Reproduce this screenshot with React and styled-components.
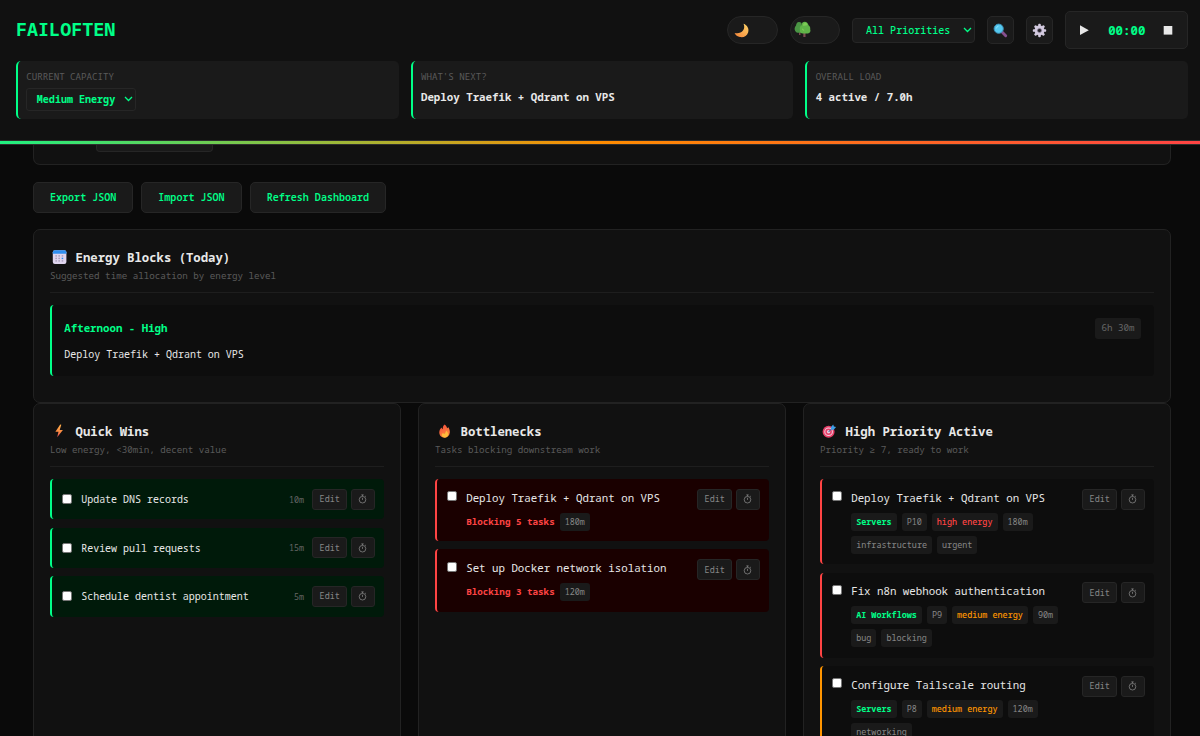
import React from "react";
import styled, { createGlobalStyle, css } from "styled-components";

const GlobalStyle = createGlobalStyle`
  * { box-sizing: border-box; }
  body {
    margin: 0;
    background: #0a0a0a;
    color: #e8e8e8;
    font-family: "Noto Sans Mono", "DejaVu Sans Mono", monospace;
    overflow: hidden;
  }
  button { font-family: inherit; margin: 0; padding: 0; }
`;

const Page = styled.div`
  height: 736px;
  overflow: hidden;
  display: flex;
  flex-direction: column;
`;

/* ---------- header ---------- */
const Header = styled.header`
  flex: none;
  height: 141px;
  padding: 11px 12px 0 16px;
  background: #111;
  border-bottom: 1px solid #2c2c2c;
`;
const TopBar = styled.div`
  display: flex;
  align-items: center;
  justify-content: space-between;
  height: 38px;
`;
const Brand = styled.h1`
  margin: 0 0 2px;
  font-size: 18.4px;
  line-height: 24px;
  font-weight: 700;
  color: #00ff88;
`;
const Tools = styled.div`
  display: flex;
  align-items: center;
  gap: 12px;
`;
const surface = css`
  background: #1a1a1a;
  border: 1px solid #262626;
`;
const Toggle = styled.div`
  ${surface}
  width: 50.5px;
  height: 28px;
  border-radius: 14px;
  padding: ${p => p.$pad};
`;
const Select = styled.div`
  ${surface}
  display: flex;
  align-items: center;
  justify-content: space-between;
  width: ${p => p.$w}px;
  height: ${p => p.$h}px;
  padding: 0 2px 0 ${p => p.$pl}px;
  border-radius: ${p => p.$r || 4}px;
  font-size: 10.05px;
  font-weight: ${p => (p.$bold ? 700 : 500)};
  color: #00ff88;
`;
const ToolButton = styled.button`
  ${surface}
  width: 27px;
  height: 28px;
  display: grid;
  place-items: center;
  border-radius: 5px;
`;
const Timer = styled.div`
  ${surface}
  width: 123px;
  height: 37.5px;
  border-radius: 5px;
  display: flex;
  align-items: center;
  justify-content: space-between;
  padding: 0 13.5px 0 13px;
  font-size: 12.4px;
  font-weight: 700;
  color: #00ff88;
`;
const Stats = styled.div`
  display: grid;
  grid-template-columns: repeat(3, 1fr);
  gap: 12px;
  margin-top: 12px;
`;
const Stat = styled.div`
  height: 58px;
  padding: 9px 8px 0 8.3px;
  background: #1a1a1a;
  border-left: 2.5px solid #00ff88;
  border-radius: 5px;
`;
const StatLabel = styled.div`
  font-size: 9.15px;
  line-height: 14px;
  color: #5a5a5a;
  margin-bottom: ${p => p.$mb || 0}px;
`;
const StatValue = styled.div`
  font-size: 10.78px;
  line-height: 16px;
  font-weight: 700;
  margin-top: 5px;
`;
const Meter = styled.div`
  flex: none;
  height: 4px;
  background: linear-gradient(90deg, #20f080 0%, #ff8c00 50%, #ff4444 100%);
  border-bottom: 1px solid #2e2e2e;
  background-clip: padding-box;
`;

/* ---------- main ---------- */
const Main = styled.main`
  flex: 1;
  min-height: 0;
  padding: 0 29px 0 33px;
  overflow: hidden;
`;
const ScrolledPanel = styled.div`
  height: 20px;
  padding-left: 62px;
  background: #111;
  border: 1px solid #222;
  border-top: 0;
  border-radius: 0 0 7px 7px;
`;
const ScrolledField = styled.div`
  ${surface}
  width: 117px;
  height: 7px;
  border-top: 0;
  border-radius: 0 0 4px 4px;
`;
const Actions = styled.div`
  display: flex;
  gap: 8px;
  padding: 17px 0 16px;
`;
const Action = styled.button`
  ${surface}
  height: 31px;
  padding: 0 16px 1.5px;
  border-radius: 5px;
  font-size: 10.05px;
  font-weight: 600;
  color: #00ff88;
`;
const Panel = styled.section`
  background: #111;
  border: 1px solid #222;
  border-radius: 7px;
  padding: 17px 16.2px 0 16px;
  height: ${p => p.$h}px;
`;
const Columns = styled.div`
  display: grid;
  grid-template-columns: repeat(3, 1fr);
  gap: 17px;
`;
const PanelHead = styled.div`
  border-bottom: 1px solid #1e1e1e;
  height: ${p => p.$h || 46}px;
  margin-bottom: 12px;
`;
const PanelTitle = styled.h2`
  margin: 0;
  display: flex;
  align-items: center;
  gap: 9px;
  height: 20px;
  font-size: 12.27px;
  font-weight: 700;
  svg { flex: none; margin-left: 1.6px; }
`;
const PanelSub = styled.div`
  font-size: 9.2px;
  line-height: 14px;
  margin-top: ${p => p.$mt || 2}px;
  color: #5a5a5a;
`;
const Block = styled.div`
  display: flex;
  justify-content: space-between;
  align-items: flex-start;
  height: 70.5px;
  padding: 12.6px 12.6px 0 12.3px;
  background: #0d0d0d;
  border-left: 2.5px solid #00ff88;
  border-radius: 4px;
`;
const BlockName = styled.div`
  font-size: 10.75px;
  line-height: 20px;
  font-weight: 700;
  color: #00ff88;
`;
const BlockTask = styled.div`
  margin-top: 8px;
  font-size: 9.98px;
  line-height: 16px;
`;
const Duration = styled.span`
  padding: 0 6.6px;
  height: 21px;
  line-height: 20.5px;
  border-radius: 3px;
  background: #1a1a1a;
  color: #666;
  font-size: 9.2px;
`;

const TaskList = styled.div`
  display: flex;
  flex-direction: column;
  gap: ${p => p.$gap}px;
`;
const tones = {
  green: ["#001a0a", "#00ff88"],
  red: ["#1a0000", "#ff4444"],
  high: ["#0d0d0d", "#ff4444"],
  medium: ["#0d0d0d", "#ff9500"],
};
const Task = styled.div`
  display: flex;
  align-items: ${p => (p.$center ? "center" : "flex-start")};
  flex: none;
  height: ${p => p.$h}px;
  padding: ${p => (p.$center ? "0" : "9.7px")} 9.3px 0 10.2px;
  background: ${p => tones[p.$tone][0]};
  border-left: 2.5px solid ${p => tones[p.$tone][1]};
  border-radius: 4px;
`;
const Check = styled.span`
  flex: none;
  width: 10px;
  height: 10px;
  margin: ${p => (p.$top ? "2.6px" : "0")} 9px 0 0;
  background: #fff;
  border: 0.8px solid #767676;
  border-radius: 2px;
`;
const TaskBody = styled.div`
  flex: 1;
  min-width: 0;
`;
const TaskName = styled.div`
  font-size: ${p => (p.$small ? 9.97 : 10.78)}px;
  line-height: 18px;
  white-space: nowrap;
`;
const TagRow = styled.div`
  display: flex;
  flex-wrap: wrap;
  gap: 5px;
  margin-top: 6px;
`;
const tagColors = { project: "#00ff88", high: "#ff4444", medium: "#ff9500" };
const Tag = styled.span`
  height: 18px;
  line-height: 17px;
  padding: 0 5px;
  border-radius: 3px;
  background: #1a1a1a;
  font-size: 8.45px;
  font-weight: ${p => (p.$kind === "project" ? 700 : p.$kind ? 500 : 400)};
  color: ${p => tagColors[p.$kind] || "#888"};
`;
const Blocking = styled.span`
  font-size: 9.22px;
  line-height: 17px;
  font-weight: 700;
  color: #ff4444;
`;
const Minutes = styled.span`
  font-size: 8.45px;
  color: #666;
  margin-right: 8px;
`;
const TaskButtons = styled.div`
  flex: none;
  display: flex;
  gap: 4px;
`;
const TaskButton = styled.button`
  ${surface}
  height: 21px;
  width: ${p => p.$w}px;
  border-radius: 3px;
  display: grid;
  place-items: center;
  color: #888;
  font-size: 8.45px;
  line-height: 18px;
`;

/* ---------- icons ---------- */
const Chevron = () => (
  <svg width="9" height="6" viewBox="0 0 9 6" fill="none" stroke="#00ff88" strokeWidth="1.3">
    <path d="M1 1l3.500 3.500L8 1" />
  </svg>
);
const MoonIcon = () => (
  <svg width="16" height="16" viewBox="0 0 16 16" display="block">
    <defs>
      <linearGradient id="moon" x1="1" y1="0" x2="0.2" y2="1">
        <stop offset="0" stopColor="#ffd76a" /><stop offset="1" stopColor="#f58a3c" />
      </linearGradient>
    </defs>
    <path fill="url(#moon)" d="M9.500 .8C13.300 2.200 15.200 5.600 14.200 9.200C13 13.200 9.500 14.800 6 14.100C3.500 13.600 1.500 12.200 .6 10C4 10.900 7.200 10 9 7.600C10.500 5.600 10.600 3 9.500 .8Z" />
  </svg>
);
const TreeIcon = () => (
  <svg width="17" height="17" viewBox="0 0 17 17" display="block">
    <path fill="#7a4a50" d="M5 10h1.500v4H5zM9.300 11h2.200v5H9.300z" />
    <path fill="#4a9544" d="M5 1C2.800 1 2.300 3 2 4.500C.6 6 .2 8 1.100 9.700C2.200 12.200 5 12 7.500 11.500V2C6.800 1.300 6 1 5 1Z" />
    <path fill="#5fb348" d="M10.800 .8C8.600 .8 7.600 2.600 7.400 4.200C5.900 5.300 5.400 7 5.900 8.400C5.300 10.600 6.800 12.500 8.900 12.500H13.800C16 12.300 17 10.200 16.200 8.200C16.500 6.600 15.900 5.200 14.500 4.200C14 2 12.700 .8 10.800 .8Z" />
    <path fill="#7dcb56" d="M11 1.600C9.600 2 8.800 3.200 9 4.700C10.700 5 12.500 4.700 13.500 4C13 2.400 12.200 1.600 11 1.600ZM8 7.500C7.800 9 9 10 10.400 9.700C10 8.500 9 7.700 8 7.500Z" />
  </svg>
);
const SearchIcon = () => (
  <svg width="15" height="15" viewBox="0 0 15 15">
    <path d="M9.300 9.300L12.700 12.700" stroke="#85508f" strokeWidth="2.900" strokeLinecap="round" />
    <circle cx="5.700" cy="5.700" r="4.600" fill="#55c8ee" stroke="#3d91b8" strokeWidth="1" />
    <path d="M3.300 5.500Q3.600 3.500 5.500 3.200" stroke="#91e4fa" strokeWidth=".9" fill="none" />
  </svg>
);
const GearIcon = () => (
  <svg width="15" height="15" viewBox="-7.500 -7.500 15 15">
    <g fill="#d3cadf">
      {[0, 45, 90, 135].map(a => (
        <rect key={a} x="-1.300" y="-6.700" width="2.600" height="13.400" rx=".9" transform={`rotate(${a})`} />
      ))}
      <circle r="4.900" />
    </g>
    <circle r="2.100" fill="#252328" stroke="#988ca8" strokeWidth=".7" />
  </svg>
);
const PlayIcon = () => (
  <svg width="11" height="12" viewBox="0 0 11 12">
    <path d="M1 1.300L9.800 6.200L1 11Z" fill="#e8e8e8" />
  </svg>
);
const StopIcon = () => (
  <svg width="10" height="10" viewBox="0 0 10 10">
    <rect x=".7" y="1" width="8.600" height="8.600" fill="#e8e8e8" />
  </svg>
);
const CalendarIcon = () => (
  <svg width="15" height="15" viewBox="0 0 15 15">
    <rect x=".8" y=".3" width="13.600" height="13.600" rx="2" fill="#dfd5ee" />
    <path d="M.8 3.800V2.300Q.8 .3 2.800 .3H12.400Q14.400 .3 14.400 2.300V3.800Z" fill="#2f8ff0" />
    <g fill="#a79bb8">
      {[5.2, 7.7, 10.2].map(y => [3.4, 6.4, 9.7].map(x => (
        <rect key={`${x}-${y}`} x={x} y={y} width="1.500" height="1.400" fill={x === 9.7 && y === 7.7 ? "#258df0" : undefined} />
      )))}
    </g>
  </svg>
);
const BoltIcon = () => (
  <svg width="15" height="15" viewBox="0 0 15 15">
    <defs><linearGradient id="bolt" x1="0" y1="0" x2="0" y2="1"><stop offset="0" stopColor="#ffb04a" /><stop offset=".55" stopColor="#fb8b42" /><stop offset="1" stopColor="#ee4a5a" /></linearGradient></defs>
    <path fill="url(#bolt)" d="M8.200 .6L3.400 7.800H6.500L5.200 13.300L10.900 6H7.700L9.300 .8Z" />
  </svg>
);
const FireIcon = () => (
  <svg width="15" height="15" viewBox="0 0 15 15">
    <defs><linearGradient id="fire" x1="0" y1="0" x2=".5" y2="1"><stop offset="0" stopColor="#f4483e" /><stop offset="1" stopColor="#ff8a3c" /></linearGradient></defs>
    <path fill="url(#fire)" d="M7.500 .4C9 1.400 10 3 10.200 4.300C10.700 3.900 11 3.500 11.100 3C12.400 4.600 13 6.600 12.800 8.600C12.500 11.900 10.200 13.800 7.600 13.800C4.600 13.800 2.300 11.600 2.300 8.600C2.300 6.300 3.300 4.800 4.600 3.600C4.700 4.500 5.200 5 5.700 5.300C5.700 3.200 6.200 1.600 7.500 .4Z" />
    <path fill="#ffbb3c" d="M9 6.600C11 8.300 11.600 10.100 10.700 11.900C10 13.100 9 13.600 7.600 13.600C6 13.500 4.900 12.500 4.800 11C4.800 9.900 5.500 9.100 6.300 8.900C6.400 9.500 6.700 9.900 7.300 10.100C8.500 9.400 8.900 8.100 9 6.600Z" />
  </svg>
);
const TargetIcon = () => (
  <svg width="15" height="15" viewBox="0 0 15 15">
    <circle cx="6.600" cy="7.800" r="6" fill="#e63f68" />
    <circle cx="6.600" cy="7.800" r="4.300" fill="#eed0e0" />
    <circle cx="6.600" cy="7.800" r="3.300" fill="#e63f68" />
    <circle cx="6.600" cy="7.800" r="1.700" fill="#eed0e0" />
    <path d="M6.600 7.800L11.300 3.200" stroke="#5d6ea8" strokeWidth="1.100" />
    <path d="M8.900 3.300L11.200 .4L11.900 2.400L14.100 3.100L11.400 5.900L9.100 5.600Z" fill="#3d9fe8" />
  </svg>
);
const StopwatchIcon = () => (
  <svg width="9" height="10" viewBox="0 0 9 10" fill="none" stroke="#888" strokeWidth=".75">
    <circle cx="4.500" cy="5.700" r="3.300" />
    <path d="M3.300 .9H5.700M4.500 .9V2.300M4.500 3.800V5.900M7.200 2L8 2.800" />
  </svg>
);

/* ---------- data ---------- */
const quickWins = [
  ["Update DNS records", "10m"],
  ["Review pull requests", "15m"],
  ["Schedule dentist appointment", "5m"],
];
const bottlenecks = [
  ["Deploy Traefik + Qdrant on VPS", "Blocking 5 tasks", "180m"],
  ["Set up Docker network isolation", "Blocking 3 tasks", "120m"],
];
const active = [
  { name: "Deploy Traefik + Qdrant on VPS", tone: "high", tags: [["Servers", "project"], ["P10"], ["high energy", "high"], ["180m"], ["infrastructure"], ["urgent"]] },
  { name: "Fix n8n webhook authentication", tone: "high", tags: [["AI Workflows", "project"], ["P9"], ["medium energy", "medium"], ["90m"], ["bug"], ["blocking"]] },
  { name: "Configure Tailscale routing", tone: "medium", tags: [["Servers", "project"], ["P8"], ["medium energy", "medium"], ["120m"], ["networking"]] },
];

const Buttons = () => (
  <TaskButtons>
    <TaskButton $w={35.2}>Edit</TaskButton>
    <TaskButton $w={23.2} aria-label="Start timer"><StopwatchIcon /></TaskButton>
  </TaskButtons>
);
const Heading = ({ icon, title, sub, subGap }) => (
  <PanelHead>
    <PanelTitle>{icon}{title}</PanelTitle>
    <PanelSub $mt={subGap}>{sub}</PanelSub>
  </PanelHead>
);

export default function App() {
  return (
    <Page>
      <GlobalStyle />
      <Header>
        <TopBar>
          <Brand>FAILOFTEN</Brand>
          <Tools>
            <Toggle $pad="6px 0 0 6px"><MoonIcon /></Toggle>
            <Toggle $pad="3.5px 0 0 3px"><TreeIcon /></Toggle>
            <Select $w={123} $h={25} $pl={13}>All Priorities<Chevron /></Select>
            <ToolButton aria-label="Search"><SearchIcon /></ToolButton>
            <ToolButton aria-label="Settings"><GearIcon /></ToolButton>
            <Timer><PlayIcon />00:00<StopIcon /></Timer>
          </Tools>
        </TopBar>
        <Stats>
          <Stat>
            <StatLabel $mb={4}>CURRENT CAPACITY</StatLabel>
            <Select $w={110} $h={22.5} $pl={9.5} $r={3} $bold>Medium Energy<Chevron /></Select>
          </Stat>
          <Stat>
            <StatLabel>WHAT'S NEXT?</StatLabel>
            <StatValue>Deploy Traefik + Qdrant on VPS</StatValue>
          </Stat>
          <Stat>
            <StatLabel>OVERALL LOAD</StatLabel>
            <StatValue>4 active / 7.0h</StatValue>
          </Stat>
        </Stats>
      </Header>
      <Meter />
      <Main>
        <ScrolledPanel><ScrolledField /></ScrolledPanel>
        <Actions>
          <Action>Export JSON</Action>
          <Action>Import JSON</Action>
          <Action>Refresh Dashboard</Action>
        </Actions>
        <Panel $h={174}>
          <Heading icon={<CalendarIcon />} title="Energy Blocks (Today)" sub="Suggested time allocation by energy level" subGap={1.5} />
          <Block>
            <div>
              <BlockName>Afternoon - High</BlockName>
              <BlockTask>Deploy Traefik + Qdrant on VPS</BlockTask>
            </div>
            <Duration>6h 30m</Duration>
          </Block>
        </Panel>
        <Columns>
          <Panel $h={420}>
            <Heading icon={<BoltIcon />} title="Quick Wins" sub="Low energy, <30min, decent value" />
            <TaskList $gap={8.2}>
              {quickWins.map(([name, mins]) => (
                <Task key={name} $tone="green" $h={40.4} $center>
                  <Check />
                  <TaskBody><TaskName $small>{name}</TaskName></TaskBody>
                  <Minutes>{mins}</Minutes>
                  <Buttons />
                </Task>
              ))}
            </TaskList>
          </Panel>
          <Panel $h={420}>
            <Heading icon={<FireIcon />} title="Bottlenecks" sub="Tasks blocking downstream work" />
            <TaskList $gap={8.2}>
              {bottlenecks.map(([name, blocking, mins]) => (
                <Task key={name} $tone="red" $h={62.2}>
                  <Check $top />
                  <TaskBody>
                    <TaskName>{name}</TaskName>
                    <TagRow><Blocking>{blocking}</Blocking><Tag>{mins}</Tag></TagRow>
                  </TaskBody>
                  <Buttons />
                </Task>
              ))}
            </TaskList>
          </Panel>
          <Panel $h={420}>
            <Heading icon={<TargetIcon />} title="High Priority Active" sub="Priority ≥ 7, ready to work" />
            <TaskList $gap={8.3}>
              {active.map(t => (
                <Task key={t.name} $tone={t.tone} $h={85.3}>
                  <Check $top />
                  <TaskBody>
                    <TaskName>{t.name}</TaskName>
                    <TagRow>{t.tags.map(([text, kind]) => <Tag key={text} $kind={kind}>{text}</Tag>)}</TagRow>
                  </TaskBody>
                  <Buttons />
                </Task>
              ))}
            </TaskList>
          </Panel>
        </Columns>
      </Main>
    </Page>
  );
}
